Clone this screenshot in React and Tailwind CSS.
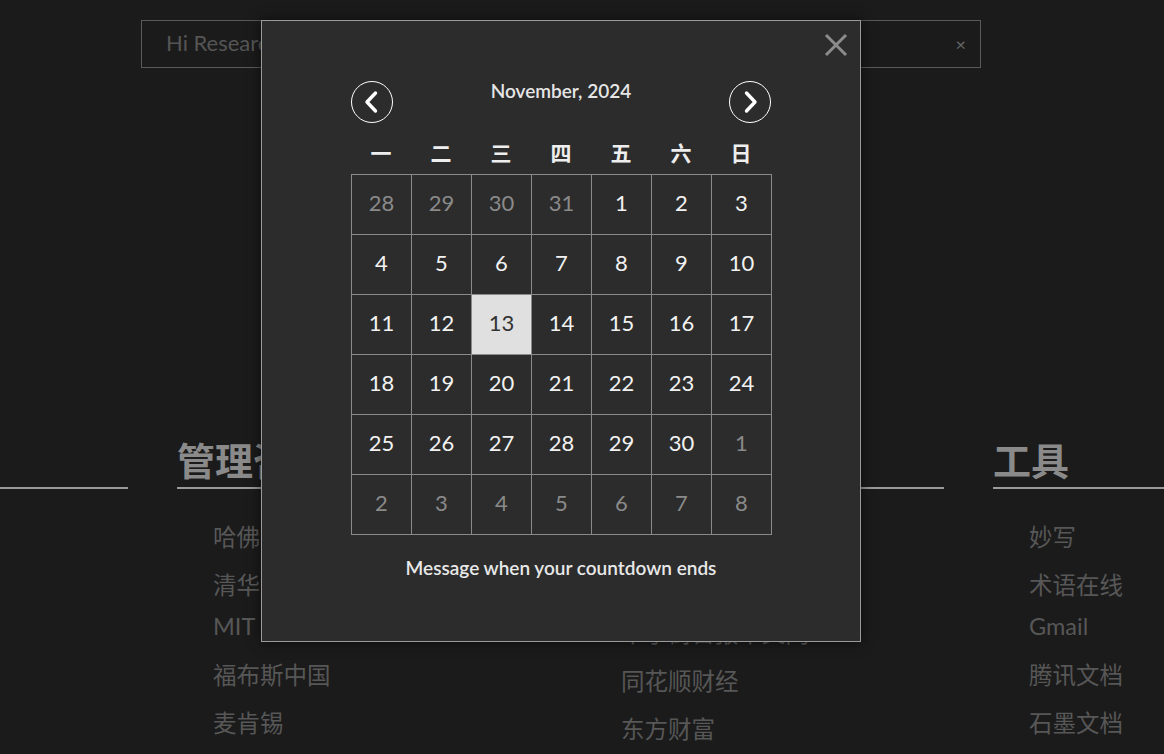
import React from 'react';

const columns = [
  { title: '学术资源', items: ['知网', '万方数据', 'Google Scholar', '百度学术', '维普'] },
  { title: '管理咨询', items: ['哈佛商业评论', '清华管理全球', 'MIT Sloan Review', '福布斯中国', '麦肯锡'] },
  { title: '财经资讯', items: ['华尔街见闻', '财新网', '华尔街日报中文网', '同花顺财经', '东方财富'] },
  { title: '工具', items: ['妙写', '术语在线', 'Gmail', '腾讯文档', '石墨文档'] },
];

const weekdays = ['一', '二', '三', '四', '五', '六', '日'];

// Nov 2024 starts on a Friday, so the grid opens with four October days
const days = [
  ...[28, 29, 30, 31].map((d) => ({ d, muted: true })),
  ...Array.from({ length: 30 }, (_, i) => ({ d: i + 1, muted: false })),
  ...[1, 2, 3, 4, 5, 6, 7, 8].map((d) => ({ d, muted: true })),
];

const isLatin = (s) => /^[\x00-\x7f]+$/.test(s);

const Chevron = ({ dir }) => (
  <svg width="24" height="24" viewBox="0 0 24 24" fill="none" stroke="white" strokeWidth="3.4" strokeLinecap="round" strokeLinejoin="round">
    {dir === 'left' ? <path d="M15.5 3 7 12l8.5 9" /> : <path d="M8.5 3 17 12l-8.5 9" />}
  </svg>
);

const CircleButton = ({ dir }) => (
  <button className="w-[42px] h-[42px] rounded-full border border-white flex items-center justify-center">
    <Chevron dir={dir} />
  </button>
);

export default function App() {
  return (
    <div className="relative w-full h-[754px] overflow-hidden bg-[#1b1b1b] font-['Lato','Noto_Sans_CJK_SC',sans-serif]">
      {/* search bar */}
      <div className="ml-[141px] mt-[20px] w-[840px] h-[48px] border border-[#5a5a5a] flex items-center justify-between pl-[24px] pr-[14px]">
        <span className="text-[22px] text-[#555] leading-none pb-[2px]">Hi Researcher, 今天想查点什么？</span>
        <span className="text-[18px] text-[#666] leading-none">×</span>
      </div>

      {/* link columns */}
      <div className="flex gap-[49px] ml-[-231px] mt-[372px]">
        {columns.map((col) => (
          <div key={col.title} className="w-[359px] shrink-0">
            <h2 className="text-[38px] leading-[40px] pb-[7px] font-bold text-[#8a8a8a] border-b-2 border-[#9a9a9a]">{col.title}</h2>
            <ul className="pl-[36px] mt-[24px]">
              {col.items.map((it) => (
                <li
                  key={it}
                  className={`text-[23.5px] text-[#575757] whitespace-nowrap ${isLatin(it) ? 'h-[42px] leading-[34px]' : 'h-[48px] leading-[48px]'}`}
                >
                  {it}
                </li>
              ))}
            </ul>
          </div>
        ))}
      </div>

      {/* date picker dialog */}
      <div className="absolute left-[261px] top-[20px] w-[600px] h-[622px] bg-[#2c2c2c] border border-[#9a9a9a] shadow-[0_0_12px_rgba(0,0,0,0.6)]">
        <button className="absolute right-[12px] top-[12px] w-[24px] h-[24px]">
          <svg width="24" height="24" viewBox="0 0 24 24" stroke="#8c8c8c" strokeWidth="3">
            <path d="M2 2l20 20M22 2 2 22" />
          </svg>
        </button>

        <div className="w-[420px] mx-auto pt-[60px]">
          <div className="flex justify-between items-start">
            <CircleButton dir="left" />
            <div className="-mt-px text-[19px] font-semibold text-[#e6e6e6] leading-[22px]">November, 2024</div>
            <CircleButton dir="right" />
          </div>

          <div className="grid grid-cols-7 mt-[19px] h-[32px] items-start">
            {weekdays.map((w) => (
              <div key={w} className="text-center text-[21px] font-bold text-[#eeeeee] leading-none">{w}</div>
            ))}
          </div>

          <div className="grid grid-cols-[repeat(7,60px)] border-t border-l border-[#8a8a8a] w-[421px]">
            {days.map((c, i) => {
              const today = !c.muted && c.d === 13;
              return (
                <div
                  key={i}
                  className={`h-[60px] pb-[4px] border-r border-b border-[#8a8a8a] flex items-center justify-center text-[22px] ${
                    today ? 'bg-[#e0e0e0] text-[#333]' : c.muted ? 'text-[#8a8a8a]' : 'text-[#f2f2f2]'
                  }`}
                >
                  {c.d}
                </div>
              );
            })}
          </div>

          <p className="mt-[21px] text-center text-[19px] font-semibold text-[#e8e8e8] leading-[24px]">Message when your countdown ends</p>
        </div>
      </div>
    </div>
  );
}
